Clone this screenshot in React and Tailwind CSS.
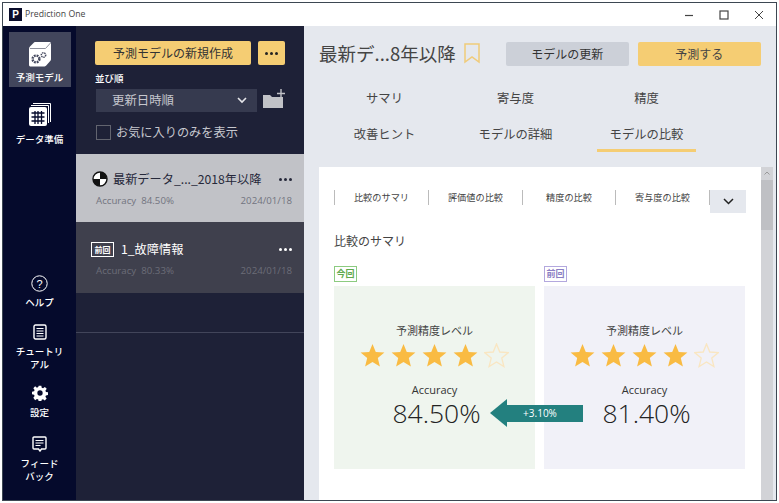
import React from "react";

const font = { fontFamily: '"Noto Sans CJK JP", "Noto Sans", sans-serif' };
const latin = { fontFamily: '"Open Sans", sans-serif' };

function Star({ filled }) {
  return (
    <svg width="25" height="25" viewBox="0 0 26 26">
      <path
        d="M13 1l3.400 8.400 9 .6-6.900 5.700 2.200 8.800L13 19.800l-7.700 4.700 2.200-8.800L.6 10l9-.6z"
        fill={filled ? "#f9bb43" : "none"}
        stroke={filled ? "#f9bb43" : "#f9e6c2"}
        strokeWidth={filled ? 0 : 1.4}
      />
    </svg>
  );
}

function Dots({ className = "" }) {
  return (
    <div className={`flex gap-[2px] ${className}`}>
      <span className="w-[3px] h-[3px] rounded-full bg-current" />
      <span className="w-[3px] h-[3px] rounded-full bg-current" />
      <span className="w-[3px] h-[3px] rounded-full bg-current" />
    </div>
  );
}

function RailItem({ icon, label, active, className = "" }) {
  return (
    <div className={`w-[62px] flex flex-col items-center text-white text-[9.5px] leading-[13px] font-medium text-center ${active ? "bg-[#42465c]" : ""} ${className}`}>
      {icon}
      <div>{label}</div>
    </div>
  );
}

function ScoreCard({ bg, value }) {
  return (
    <div className={`w-[201px] h-[183px] ${bg} flex flex-col items-center pt-[35px]`}>
      <div className="text-[11px] leading-[18px] text-[#444]">予測精度レベル</div>
      <div className="flex gap-[6px] mt-[4px]">
        <Star filled /><Star filled /><Star filled /><Star filled /><Star />
      </div>
      <div className="text-[11px] leading-[16px] mt-[14px] text-[#333]" style={latin}>Accuracy</div>
      <div className="text-[26.500px] leading-[28px] mt-[1px] text-[#222] font-light pl-[4px]" style={latin}>{value}</div>
    </div>
  );
}

function Row({ active, icon, title, acc, height, top }) {
  return (
    <div className={`${height} ${top} shrink-0 px-[15px] ${active ? "bg-[#c1c2c7] text-[#26283a]" : "bg-[#3f404d] text-white"}`}>
      <div className="flex items-center h-[22px]">
        {icon}
        <div className="text-[12.200px] leading-[22px] flex-1 ml-[5px] whitespace-nowrap">{title}</div>
        <Dots className="mr-[-3px]" />
      </div>
      <div className={`flex justify-between text-[9.700px] leading-[14px] mt-[4px] pl-[5px] ${active ? "text-[#72747f]" : "text-[#6c6d78]"}`} style={latin}>
        <span>Accuracy&nbsp; {acc}</span>
        <span className="mr-[-3px]">2024/01/18</span>
      </div>
    </div>
  );
}

function Tab({ label, active }) {
  return (
    <div className="w-[131px] h-[36px] flex flex-col items-center justify-center relative text-[12.300px] text-[#444]">
      {label}
      {active && <div className="absolute bottom-0 left-[16px] w-[99px] h-[3px] bg-[#f5cd73]" />}
    </div>
  );
}

function SubTab({ label, width }) {
  return (
    <div className={`${width} h-[15px] border-l border-[#bbb] flex items-center justify-center text-[9.200px] text-[#444]`}>{label}</div>
  );
}

export default function App() {
  return (
    <div className="w-[779px] h-[503px] bg-white p-[2px] overflow-hidden" style={font}>
      <div className="w-[775px] h-[499px] border border-[#3d4752] flex flex-col overflow-hidden">
        {/* title bar */}
        <div className="h-[23px] bg-white flex items-center shrink-0 pl-[6px]">
          <div className="w-[13px] h-[13px] bg-[#0a0d2b] text-white text-[10px] leading-[13px] font-bold text-center" style={{ fontFamily: '"Liberation Sans", sans-serif' }}>P</div>
          <div className="ml-[3px] text-[8.700px] text-[#444]" style={latin}>Prediction One</div>
          <div className="ml-auto flex items-center gap-[25px] pr-[12px] text-[#444]">
            <svg width="10" height="10" viewBox="0 0 10 10"><path d="M1 5.500h8" stroke="#444" strokeWidth="1.2" /></svg>
            <svg width="10" height="10" viewBox="0 0 10 10"><rect x="1" y="1" width="8" height="8" fill="none" stroke="#444" strokeWidth="1.2" /></svg>
            <svg width="10" height="10" viewBox="0 0 10 10"><path d="M1 1l8 8M9 1l-8 8" stroke="#444" strokeWidth="1" /></svg>
          </div>
        </div>

        <div className="flex-1 flex min-h-0">
          {/* rail */}
          <div className="w-[73px] bg-[#050a2c] flex flex-col items-center pt-[6px] pb-[17px] shrink-0">
            <RailItem
              active
              className="h-[55px] pt-[9px]"
              label="予測モデル"
              icon={
                <svg width="24" height="27" viewBox="0 0 24 27" className="mb-[3px]">
                  <path d="M1 8c0-1 .4-1.800 1-2.400L6 1.500C6.500 1 7 1 8 1h13c1.500 0 2 .5 2 2v15c0 1-.3 1.600-1 2.300l-4 4.500c-.6.6-1 .7-2 .7H3c-1.500 0-2-.5-2-2z" fill="#fff" />
                  <path d="M2 7.500h15.500L22.500 2" stroke="#8e909c" strokeWidth="1" fill="none" />
                  <circle cx="8" cy="18" r="3.400" fill="none" stroke="#42465c" strokeWidth="2.400" strokeDasharray="1.800 .9" />
                  <circle cx="15.500" cy="14" r="2.200" fill="none" stroke="#42465c" strokeWidth="1.500" strokeDasharray="1.300 .7" />
                </svg>
              }
            />
            <RailItem
              className="mt-[15px]"
              label="データ準備"
              icon={
                <svg width="24" height="25" viewBox="0 0 24 25" className="mb-[6px]">
                  <path d="M5 1h17a1 1 0 0 1 1 1v18h-1V2H5z" fill="#fff" />
                  <path d="M3 3h17a1 1 0 0 1 1 1v17h-1V4H3z" fill="#fff" />
                  <rect x="1" y="5" width="18" height="19" rx="2" fill="#fff" />
                  <path d="M3.500 11h13M3.500 15h13M3.500 19h13M7 9v13M10 9v13M13.500 9v13" stroke="#050a2c" strokeWidth="1.300" />
                </svg>
              }
            />
            <div className="flex-1" />
            <RailItem
              label="ヘルプ"
              icon={
                <svg width="17" height="17" viewBox="0 0 17 17" className="mb-[4px]">
                  <circle cx="8.500" cy="8.500" r="7.700" fill="none" stroke="#fff" strokeWidth="1" />
                  <text x="8.500" y="12.500" fontSize="11" fill="#fff" textAnchor="middle" fontFamily="Liberation Sans">?</text>
                </svg>
              }
            />
            <RailItem
              className="mt-[15px]"
              label={<>チュートリ<br />アル</>}
              icon={
                <svg width="14" height="16" viewBox="0 0 14 16" className="mb-[5px]">
                  <rect x="1" y="1" width="12" height="14" rx="1.500" fill="none" stroke="#fff" strokeWidth="1.400" />
                  <path d="M3.500 4.500h7M3.500 7h7M3.500 9.500h7M3.500 12h7" stroke="#fff" strokeWidth="1" />
                </svg>
              }
            />
            <RailItem
              className="mt-[14px]"
              label="設定"
              icon={
                <svg width="16" height="16" viewBox="0 0 24 24" className="mb-[5px]">
                  <path fill="#fff" fillRule="evenodd" d="M10 1h4l.6 3.200 2 .8L19.300 3l2.800 2.800-2 2.700.9 2 3 .5v4l-3.100.6-.8 2 1.900 2.700-2.800 2.800-2.700-1.900-2 .8-.5 3h-4l-.6-3.100-2-.8-2.700 1.900L2 19.300l1.900-2.700-.8-2L0 14v-4l3.100-.6.8-2L2 4.700 4.700 2l2.700 2 2-.9zM12 8a4 4 0 1 0 0 8 4 4 0 0 0 0-8z" />
                </svg>
              }
            />
            <RailItem
              className="mt-[17px]"
              label={<>フィード<br />バック</>}
              icon={
                <svg width="15" height="16" viewBox="0 0 15 16" className="mb-[5px]">
                  <path d="M2 1h11a1 1 0 0 1 1 1v10a1 1 0 0 1-1 1H9.500L8 15l-1.500-2H2a1 1 0 0 1-1-1V2a1 1 0 0 1 1-1z" fill="none" stroke="#fff" strokeWidth="1.400" />
                  <path d="M3.500 4.500h8M3.500 7h8M3.500 9.500h5" stroke="#fff" strokeWidth="1" />
                </svg>
              }
            />
          </div>

          {/* list */}
          <div className="w-[228px] bg-[#1e2137] shrink-0 flex flex-col">
            <div className="h-[128px] shrink-0 pl-[19px] pt-[15px]">
              <div className="flex gap-[7px]">
                <div className="w-[156px] h-[24px] rounded-[2px] bg-[#f5cd73] text-[#333] text-[12px] flex items-center justify-center">予測モデルの新規作成</div>
                <div className="w-[27px] h-[24px] rounded-[2px] bg-[#f5cd73] text-[#222] flex items-center justify-center"><Dots /></div>
              </div>
              <div className="text-white text-[9.500px] leading-[14px] mt-[6px] font-medium">並び順</div>
              <div className="flex items-center mt-[4px]">
                <div className="ml-[1px] w-[161px] h-[23px] bg-[#363a4f] text-[#c6c7ce] text-[12.400px] flex items-center pl-[16px] relative">
                  更新日時順
                  <svg className="absolute right-[10px] top-[8px]" width="10" height="7" viewBox="0 0 10 7"><path d="M1 1l4 4 4-4" fill="none" stroke="#e6e6ea" strokeWidth="1.600" /></svg>
                </div>
                <svg width="24" height="20" viewBox="0 0 24 20" className="ml-[5px] mt-[-4px]">
                  <path d="M1 6h7l2 2h11v11H1z" fill="#c1c2c7" />
                  <path d="M19 0v9M15 4.500h8" stroke="#c1c2c7" strokeWidth="1.400" />
                </svg>
              </div>
              <div className="flex items-center mt-[11px] ml-[1px]">
                <div className="w-[15px] h-[15px] border border-[#62646f]" />
                <div className="ml-[5px] text-[12.200px] text-[#c6c7ce]">お気に入りのみを表示</div>
              </div>
            </div>
            <Row
              active
              height="h-[68px]"
              top="pt-[14px]"
              title="最新データ_..._2018年以降"
              acc="84.50%"
              icon={
                <svg width="16" height="16" viewBox="0 0 16 16" className="ml-[1px]">
                  <circle cx="8" cy="8" r="7" fill="#fff" stroke="#111" strokeWidth="1.400" />
                  <path d="M8 1a7 7 0 0 1 7 7H8zM8 8v7a7 7 0 0 1-7-7z" fill="#111" />
                </svg>
              }
            />
            <Row
              height="h-[71px]"
              top="pt-[16px]"
              title="1_故障情報"
              acc="80.33%"
              icon={
                <div className="w-[23px] h-[15px] border border-white text-[8px] leading-[13px] text-center font-bold mr-[2px]">前回</div>
              }
            />
            <div className="h-[40px] shrink-0 border-b border-[#42455a]" />
          </div>

          {/* main */}
          <div className="flex-1 min-w-0 bg-[#e5e8ee] flex flex-col">
            <div className="h-[141px] shrink-0 pl-[15px] pt-[15px]">
              <div className="flex items-center h-[25px]">
                <div className="text-[18.500px] leading-[25px] text-[#444] whitespace-nowrap">最新デ...8年以降</div>
                <svg width="16" height="21" viewBox="0 0 16 21" className="ml-[8px]"><path d="M1 1h14v18l-7-5-7 5z" fill="none" stroke="#f0cb7a" strokeWidth="1.500" /></svg>
                <div className="ml-[26px] w-[123px] h-[24px] rounded-[2px] bg-[#ccd0d8] text-[#333] text-[12px] flex items-center justify-center">モデルの更新</div>
                <div className="ml-[9px] w-[123px] h-[24px] rounded-[2px] bg-[#f5cd73] text-[#444] text-[12px] flex items-center justify-center">予測する</div>
              </div>
              <div className="flex flex-wrap w-[393px] mt-[14px]">
                <Tab label="サマリ" />
                <Tab label="寄与度" />
                <Tab label="精度" />
                <Tab label="改善ヒント" />
                <Tab label="モデルの詳細" />
                <Tab label="モデルの比較" active />
              </div>
            </div>
            <div className="flex-1 min-h-0 flex pl-[15px]">
              <div className="w-[442px] bg-white pl-[15px] pt-[23px] overflow-hidden">
                <div className="flex items-start">
                  <SubTab width="w-[94px]" label="比較のサマリ" />
                  <SubTab width="w-[94px]" label="評価値の比較" />
                  <SubTab width="w-[93px]" label="精度の比較" />
                  <SubTab width="w-[94px]" label="寄与度の比較" />
                  <div className="w-px h-[15px] bg-[#bbb]" />
                  <div className="w-[36px] h-[23px] bg-[#e5e8ee] flex items-center justify-center">
                    <svg width="11" height="7" viewBox="0 0 11 7"><path d="M1 1l4.500 4.500L10 1" fill="none" stroke="#222" strokeWidth="1.500" /></svg>
                  </div>
                </div>
                <div className="text-[12px] leading-[18px] text-[#444] mt-[19px]">比較のサマリ</div>
                <div className="flex gap-[9px] mt-[16px] h-[16px]">
                  <div className="w-[201px]">
                    <div className="w-[23px] h-[16px] border border-[#8ccb80] text-[#5fa94e] text-[9px] leading-[14px] text-center font-bold">今回</div>
                  </div>
                  <div className="w-[201px]">
                    <div className="w-[23px] h-[16px] border border-[#b3a8de] text-[#8b7fc4] text-[9px] leading-[14px] text-center font-bold">前回</div>
                  </div>
                </div>
                <div className="flex gap-[9px] mt-[4px] relative">
                  <ScoreCard bg="bg-[#eff5ee]" value="84.50%" />
                  <ScoreCard bg="bg-[#f1f1f8]" value="81.40%" />
                  <div className="absolute left-[156px] top-[113px] flex items-center">
                    <div className="w-0 h-0 border-y-[14.500px] border-y-transparent border-r-[17px] border-r-[#23807f]" />
                    <div className="w-[76px] h-[17px] bg-[#23807f] text-white text-[10px] leading-[17px] text-center pr-[10px]" style={latin}>+3.10%</div>
                  </div>
                </div>
              </div>
              <div className="w-[12px] bg-[#d2d3d7] flex flex-col items-center shrink-0">
                <svg width="8" height="13" viewBox="0 0 8 13" className="shrink-0"><path d="M1.500 7.500L4 5l2.500 2.500" fill="none" stroke="#999" /></svg>
                <div className="w-full h-[50px] bg-[#bfc0c4]" />
              </div>
            </div>
          </div>
        </div>
      </div>
    </div>
  );
}
